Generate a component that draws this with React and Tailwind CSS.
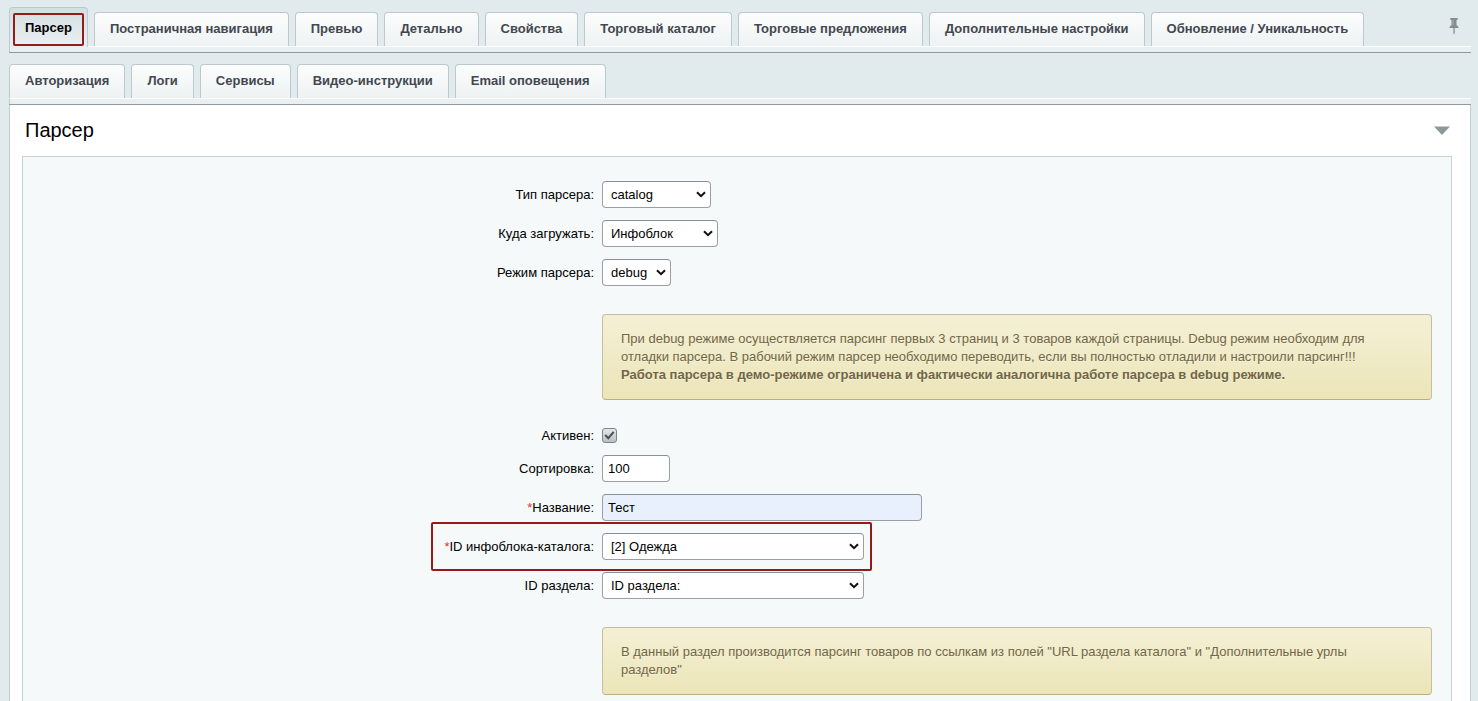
import React, { useState } from 'react';
import clsx from 'clsx';

const TAB_ROWS = [
  [
    'Парсер',
    'Постраничная навигация',
    'Превью',
    'Детально',
    'Свойства',
    'Торговый каталог',
    'Торговые предложения',
    'Дополнительные настройки',
    'Обновление / Уникальность',
  ],
  ['Авторизация', 'Логи', 'Сервисы', 'Видео-инструкции', 'Email оповещения'],
];

const fieldClass = 'h-[27px] rounded border border-[#9a9fa3] border-t-[#87919c] text-[13px] text-black outline-none';

function PinIcon() {
  return (
    <svg width="10" height="17" viewBox="0 0 10 17" fill="#848c8f" aria-hidden="true">
      <path d="M1.300 0h7.400v1.700L7.500 2v5.200c1.200.5 2 1.300 2 2.800H.5c0-1.500.8-2.300 2-2.800V2l-1.200-.3z" />
      <path d="M4.400 10h1.300v5L5 16.600 4.400 15z" />
      <path d="M3.600 2h1v5.500h-1z" fill="#a5adb0" />
    </svg>
  );
}

function Tab({ label, active, onClick }) {
  if (active) {
    return (
      <button
        role="tab"
        aria-selected="true"
        onClick={onClick}
        className="relative -mb-px h-10 rounded-t border border-b-0 border-[#bccacf] bg-linear-to-b from-[#d3dfe2] to-[#eaf0f2] px-[15px] text-[13px] font-bold text-black"
      >
        <span className="absolute inset-x-[3px] top-[5px] bottom-px rounded-[2px] border-2 border-[#931c18]" />
        {label}
      </button>
    );
  }

  return (
    <button
      role="tab"
      aria-selected="false"
      onClick={onClick}
      className="h-[34px] rounded-t border border-b-0 border-[#bdc9cd] bg-linear-to-b from-[#fcfdfd] to-[#eef2f3] px-[15px] pb-0.5 text-[13px] font-bold text-[#43474f]"
    >
      {label}
    </button>
  );
}

function TabRow({ tabs, current, onSelect, children }) {
  return (
    <div className="flex flex-col">
      <div role="tablist" className="flex h-[46px] items-end gap-1.5">
        {tabs.map((tab) => (
          <Tab key={tab} label={tab} active={tab === current} onClick={() => onSelect(tab)} />
        ))}
        {children}
      </div>
      <div className="h-1.5 border-t border-l border-t-white border-l-[#bccacf] bg-[#eaf0f2]" />
      <div className="h-px bg-[#8d9a9f]" />
    </div>
  );
}

function Row({ id, label, required, highlighted, children }) {
  return (
    <div className="flex items-center text-[13px]">
      <div className="w-2/5 px-1 py-1.5 text-right leading-[15px]">
        <label htmlFor={id}>
          {required && <span className="text-[#e0352b]">*</span>}
          {label}:
        </label>
      </div>
      <div className="relative flex w-3/5 items-center py-1.5 pl-1">
        {children}
        {highlighted && (
          <span className="pointer-events-none absolute -top-[5px] -bottom-[5px] -left-[167px] w-[441px] rounded-[2px] border-2 border-[#931c18]" />
        )}
      </div>
    </div>
  );
}

function Select({ id, options, className }) {
  return (
    <div className={clsx('relative flex', className)}>
      <select id={id} className={clsx(fieldClass, 'w-full appearance-none bg-white px-2')}>
        {options.map((option) => (
          <option key={option}>{option}</option>
        ))}
      </select>
      <svg
        className="pointer-events-none absolute top-2.5 right-[5px]"
        width="10"
        height="7"
        viewBox="0 0 10 7"
        fill="none"
        stroke="#101010"
        strokeWidth="2"
        aria-hidden="true"
      >
        <path d="M1 1.200l4 4 4-4" />
      </svg>
    </div>
  );
}

function Note({ children }) {
  return (
    <div className="flex justify-end py-1.5">
      <div className="w-3/5 pl-1">
        <div className="my-4 rounded border border-[#c6bf9f] border-b-[#bcae80] bg-linear-to-b from-[#f4f0d6] to-[#ece5b8] py-[15px] pr-[30px] pl-[18px] text-[13px] leading-[18px] text-[#716646] text-shadow-[0_1px_0_#f7f2d8]">
          {children}
        </div>
      </div>
    </div>
  );
}

export default function App() {
  const [tab, setTab] = useState('Парсер');
  const [open, setOpen] = useState(true);
  const [active, setActive] = useState(true);

  return (
    <div className="flex min-h-screen flex-col overflow-hidden bg-[#e1eaec] pr-[7px] pl-[9px] font-['Liberation_Sans',Arial,sans-serif] text-black">
      <TabRow tabs={TAB_ROWS[0]} current={tab} onSelect={setTab}>
        <button aria-label="Закрепить" className="mr-3 mb-[11px] ml-auto">
          <PinIcon />
        </button>
      </TabRow>
      <div className="-mt-px">
        <TabRow tabs={TAB_ROWS[1]} current={tab} onSelect={setTab} />
      </div>

      <section className="flex grow flex-col border-x border-[#c3ced1] bg-white px-3">
        <div className="flex h-[51px] items-center justify-between pr-[7px] pl-[3px]">
          <h2 className="pb-0.5 text-xl">Парсер</h2>
          <button aria-label="Свернуть" onClick={() => setOpen(!open)}>
            <svg width="18" height="9" viewBox="0 0 18 9" aria-hidden="true">
              <path d="M1 .5h16L9 9z" fill="#8e989b" />
            </svg>
          </button>
        </div>

        {open && (
          <div className="mr-[6px] grow border border-b-0 border-[#c6d2d5] bg-[#f5f9f9] px-[19px] pt-[18px]">
            <Row id="type" label="Тип парсера">
              <Select id="type" options={['catalog', 'rss', 'page']} className="w-[109px]" />
            </Row>
            <Row id="target" label="Куда загружать">
              <Select id="target" options={['Инфоблок', 'HL-блок']} className="w-[116px]" />
            </Row>
            <Row id="mode" label="Режим парсера">
              <Select id="mode" options={['debug', 'work']} className="w-[69px]" />
            </Row>

            <Note>
              При debug режиме осуществляется парсинг первых 3 страниц и 3 товаров каждой страницы. Debug режим необходим для
              отладки парсера. В рабочий режим парсер необходимо переводить, если вы полностью отладили и настроили парсинг!!!
              <br />
              <b>Работа парсера в демо-режиме ограничена и фактически аналогична работе парсера в debug режиме.</b>
            </Note>

            <Row id="active" label="Активен">
              <span className="relative flex">
                <input
                  id="active"
                  type="checkbox"
                  checked={active}
                  onChange={(e) => setActive(e.target.checked)}
                  className="size-[15px] appearance-none rounded-[3px] border border-[#7d8589] bg-linear-to-b from-[#e4e8e9] to-[#b9c0c3]"
                />
                {active && (
                  <svg className="pointer-events-none absolute inset-0" width="15" height="15" viewBox="0 0 15 15" fill="none" aria-hidden="true">
                    <path d="M3.200 7l3.100 3.200 5.400-6.400" stroke="#4a5053" strokeWidth="2" />
                  </svg>
                )}
              </span>
            </Row>
            <Row id="sort" label="Сортировка">
              <input id="sort" type="text" defaultValue="100" className={clsx(fieldClass, 'w-[68px] bg-white px-[5px]')} />
            </Row>
            <Row id="name" label="Название" required>
              <input id="name" type="text" defaultValue="Тест" className={clsx(fieldClass, 'w-80 bg-[#e8f0fe] px-[5px]')} />
            </Row>
            <Row id="iblock" label="ID инфоблока-каталога" required highlighted>
              <Select id="iblock" options={['[2] Одежда']} className="w-[262px]" />
            </Row>
            <Row id="section" label="ID раздела">
              <Select id="section" options={['ID раздела:']} className="w-[262px]" />
            </Row>

            <Note>
              В данный раздел производится парсинг товаров по ссылкам из полей "URL раздела каталога" и "Дополнительные урлы
              разделов"
            </Note>
          </div>
        )}
      </section>
    </div>
  );
}
